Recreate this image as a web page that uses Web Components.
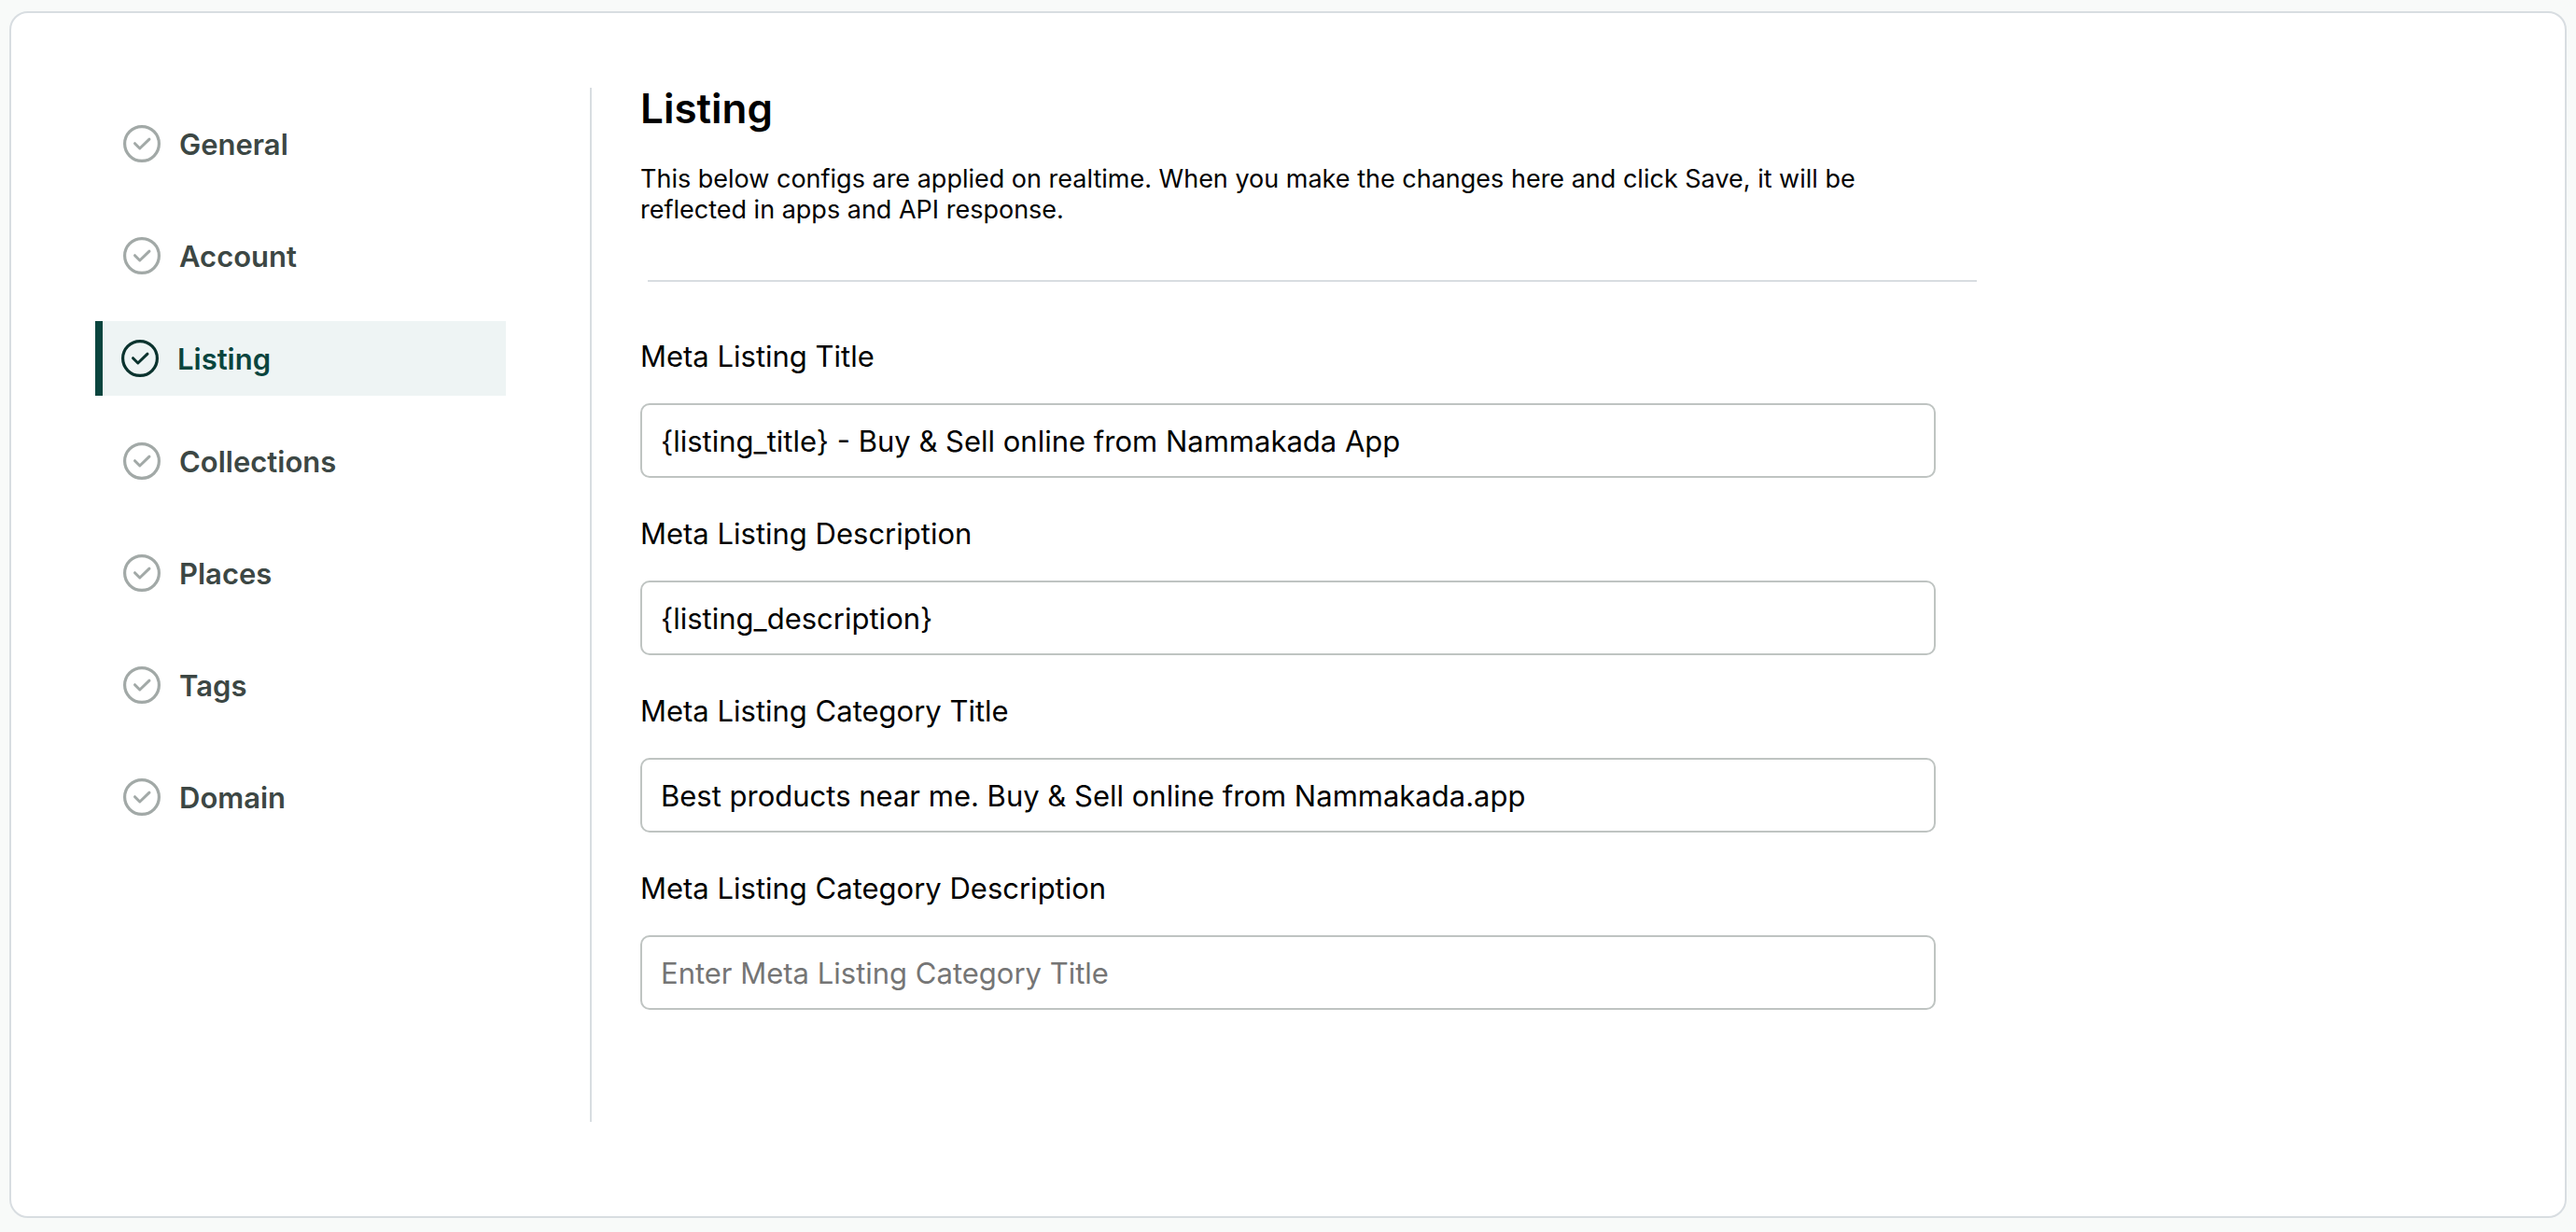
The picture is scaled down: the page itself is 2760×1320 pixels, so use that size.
<!DOCTYPE html>
<html lang="en">
<head>
<meta charset="utf-8">
<meta name="viewport" content="width=device-width, initial-scale=1">
<title>Listing</title>
<style>
	body {
		margin: 0;
		background: #f8faf9;
		color: #000;
		font-family: Inter, "Liberation Sans", sans-serif;
	}
</style>
</head>
<body>
	<settings-card>
		<settings-nav slot="nav">
			<nav-item href="#general">General</nav-item>
			<nav-item href="#account">Account</nav-item>
			<nav-item href="#listing" active>Listing</nav-item>
			<nav-item href="#collections">Collections</nav-item>
			<nav-item href="#places">Places</nav-item>
			<nav-item href="#tags">Tags</nav-item>
			<nav-item href="#domain">Domain</nav-item>
		</settings-nav>
		<settings-section>
			<span slot="title">Listing</span>
			<span slot="info">This below configs are applied on realtime. When you make the changes here and click Save, it will be reflected in apps and API response.</span>
			<text-field label="Meta Listing Title" value="{listing_title} - Buy &amp; Sell online from Nammakada App"></text-field>
			<text-field label="Meta Listing Description" value="{listing_description}"></text-field>
			<text-field label="Meta Listing Category Title" value="Best products near me. Buy &amp; Sell online from Nammakada.app"></text-field>
			<text-field label="Meta Listing Category Description" placeholder="Enter Meta Listing Category Title"></text-field>
		</settings-section>
	</settings-card>

<script>
	class SettingsCard extends HTMLElement {
		connectedCallback() {
			this.attachShadow({mode: 'open'});
			this.shadowRoot.innerHTML = this.render();
		}
		render() {
			return `<style>
				:host {
					display: flex;
					min-height: 100vh;
					box-sizing: border-box;
					padding: 12px 10px 15px;
				}
				.card {
					flex: 1;
					display: flex;
					box-sizing: border-box;
					padding: 80px 90px 101px;
					border: 2px solid #d8dde1;
					border-radius: 20px;
					background: #fff;
				}
				main {
					flex: 1;
					min-width: 0;
					padding-left: 52px;
					border-left: 2px solid #d8dde1;
				}
			</style>
			<div class="card">
				<slot name="nav"></slot>
				<main><slot></slot></main>
			</div>`;
		}
	}

	class SettingsNav extends HTMLElement {
		connectedCallback() {
			this.attachShadow({mode: 'open'});
			this.shadowRoot.innerHTML = `<style>
				:host {
					display: block;
					flex: 0 1 440px;
					margin-right: 90px;
				}
				nav {
					display: flex;
					flex-direction: column;
				}
			</style>
			<nav><slot></slot></nav>`;
		}
	}

	class NavItem extends HTMLElement {
		connectedCallback() {
			this.attachShadow({mode: 'open'});
			this.shadowRoot.innerHTML = `${this.css()}${this.html()}`;
		}
		css() {
			return `<style>
				:host {
					display: block;
				}
				:host([active]) {
					padding: 10px 0;
				}
				a {
					display: flex;
					align-items: center;
					gap: 20px;
					box-sizing: border-box;
					height: 120px;
					padding-left: 30px;
					color: #3c4744;
					font-size: 31px;
					line-height: 40px;
					font-weight: 600;
					text-decoration: none;
				}
				svg {
					width: 40px;
					height: 40px;
					color: #a2a9a7;
				}
				.text {
					padding-top: 2px;
				}
				:host([active]) a {
					height: 80px;
					padding-left: 20px;
					border-left: 8px solid #0a453e;
					background: #eef4f4;
					color: #0a453e;
				}
				:host([active]) svg {
					color: #0b332e;
				}
			</style>`;
		}
		html() {
			return `<a href="${this.getAttribute('href')}"${this.hasAttribute('active') ? ' aria-current="page"' : ''}>
				<svg viewBox="0 0 40 40" fill="none" stroke="currentColor" stroke-width="3" stroke-linecap="round" stroke-linejoin="round" aria-hidden="true">
					<circle cx="20" cy="20" r="18.4" stroke-width="3.2"/>
					<path d="M12.5 19.7l5.3 5.3L28 15.2"/>
				</svg>
				<span class="text"><slot></slot></span>
			</a>`;
		}
	}

	class SettingsSection extends HTMLElement {
		connectedCallback() {
			this.attachShadow({mode: 'open'});
			this.shadowRoot.innerHTML = `<style>
				:host {
					display: block;
					max-width: 1432px;
				}
				h1 {
					margin: 0;
					font-size: 44px;
					line-height: 44px;
					font-weight: 600;
				}
				p {
					max-width: 1340px;
					margin: 37px 0 0;
					font-size: 27px;
					line-height: 33px;
				}
				hr {
					height: 2px;
					margin: 59px 0 0 8px;
					border: 0;
					background: #d8dde1;
				}
				form {
					display: flex;
					flex-direction: column;
					gap: 40px;
					padding: 60px 44px 0 0;
				}
			</style>
			<h1><slot name="title"></slot></h1>
			<p><slot name="info"></slot></p>
			<hr>
			<form><slot></slot></form>`;
		}
	}

	class TextField extends HTMLElement {
		connectedCallback() {
			this.attachShadow({mode: 'open'});
			this.shadowRoot.innerHTML = `${this.css()}${this.html()}`;
			const input = this.shadowRoot.querySelector('input');
			input.value = this.getAttribute('value') || '';
			input.placeholder = this.getAttribute('placeholder') || '';
		}
		css() {
			return `<style>
				:host {
					display: block;
				}
				label {
					display: block;
					margin-bottom: 30px;
					font-size: 31px;
					line-height: 40px;
				}
				input {
					display: block;
					box-sizing: border-box;
					width: 100%;
					height: 80px;
					padding: 0 20px;
					border: 2px solid #bfc4c2;
					border-radius: 10px;
					background: #fff;
					color: #000;
					font: inherit;
					font-size: 31px;
				}
				input::placeholder {
					color: #757575;
				}
			</style>`;
		}
		html() {
			return `<label for="field">${this.getAttribute('label')}</label>
			<input id="field" type="text">`;
		}
	}

	customElements.define('settings-card', SettingsCard);
	customElements.define('settings-nav', SettingsNav);
	customElements.define('nav-item', NavItem);
	customElements.define('settings-section', SettingsSection);
	customElements.define('text-field', TextField);
</script>
</body>
</html>
